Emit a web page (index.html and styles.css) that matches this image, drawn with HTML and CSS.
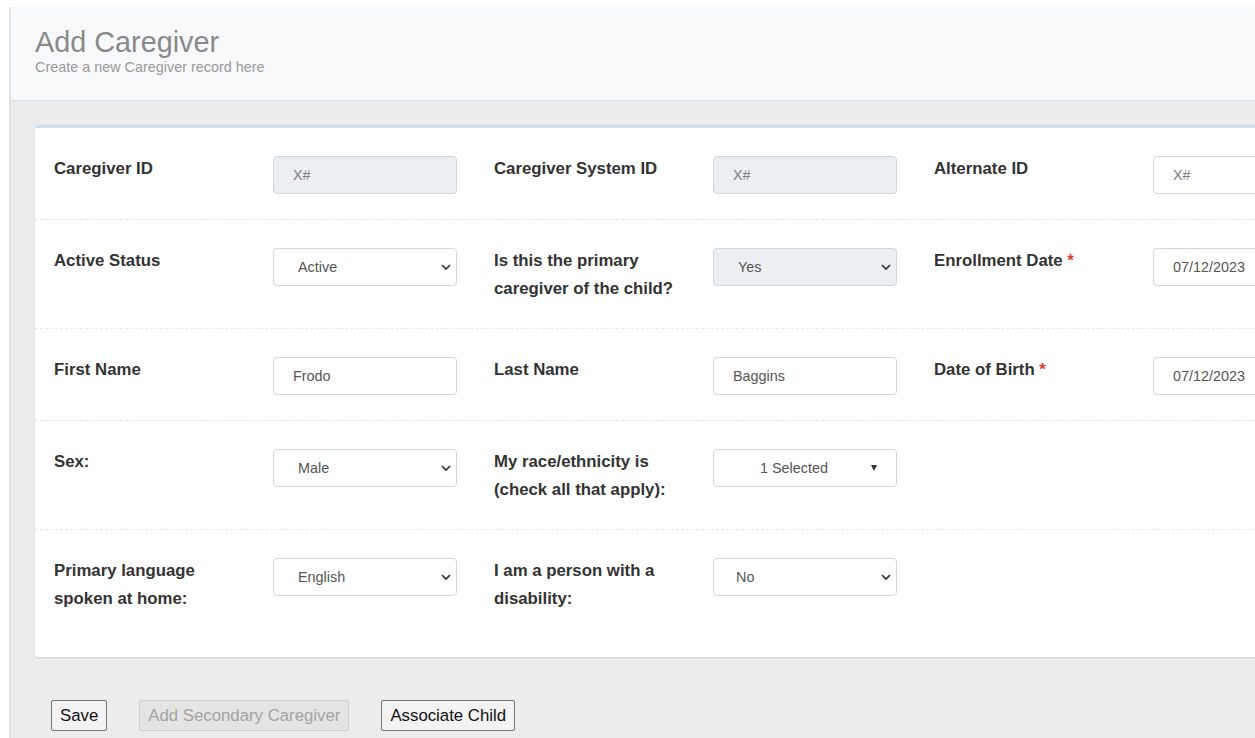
FILE: index.html
```html
<!DOCTYPE html>
<html lang="en">
<head>
<meta charset="utf-8">
<title>Add Caregiver</title>
<link rel="stylesheet" href="styles.css">
</head>
<body>
<div class="topbar"></div>
<main class="page">
  <header class="page-head">
    <h1 class="page-title">Add Caregiver</h1>
    <p class="page-sub">Create a new Caregiver record here</p>
  </header>

  <section class="content">
    <form class="card">
      <div class="form-row">
        <div class="field">
          <label class="field-label">Caregiver ID</label>
          <input class="control" type="text" value="X#" disabled>
        </div>
        <div class="field">
          <label class="field-label">Caregiver System ID</label>
          <input class="control" type="text" value="X#" disabled>
        </div>
        <div class="field">
          <label class="field-label">Alternate ID</label>
          <input class="control placeholder" type="text" placeholder="X#">
        </div>
      </div>

      <div class="form-row">
        <div class="field">
          <label class="field-label">Active Status</label>
          <div class="select-wrap">
            <select class="control select"><option>Active</option><option>Inactive</option></select>
            <svg class="chev" width="12" height="8" viewBox="0 0 12 8"><polyline points="2,2 6,6 10,2" fill="none" stroke="#333" stroke-width="1.7"/></svg>
          </div>
        </div>
        <div class="field">
          <label class="field-label">Is this the primary caregiver of the child?</label>
          <div class="select-wrap">
            <select class="control select locked" aria-disabled="true"><option>Yes</option><option>No</option></select>
            <svg class="chev" width="12" height="8" viewBox="0 0 12 8"><polyline points="2,2 6,6 10,2" fill="none" stroke="#333" stroke-width="1.7"/></svg>
          </div>
        </div>
        <div class="field">
          <label class="field-label">Enrollment Date <span class="req">*</span></label>
          <input class="control" type="text" value="07/12/2023">
        </div>
      </div>

      <div class="form-row">
        <div class="field">
          <label class="field-label">First Name</label>
          <input class="control" type="text" value="Frodo">
        </div>
        <div class="field">
          <label class="field-label">Last Name</label>
          <input class="control" type="text" value="Baggins">
        </div>
        <div class="field">
          <label class="field-label">Date of Birth <span class="req">*</span></label>
          <input class="control" type="text" value="07/12/2023">
        </div>
      </div>

      <div class="form-row">
        <div class="field">
          <label class="field-label">Sex:</label>
          <div class="select-wrap">
            <select class="control select"><option>Male</option><option>Female</option></select>
            <svg class="chev" width="12" height="8" viewBox="0 0 12 8"><polyline points="2,2 6,6 10,2" fill="none" stroke="#333" stroke-width="1.7"/></svg>
          </div>
        </div>
        <div class="field">
          <label class="field-label">My race/ethnicity is (check all that apply):</label>
          <button type="button" class="control multi">
            <span class="multi-text">1 Selected</span>
            <span class="caret"></span>
          </button>
        </div>
      </div>

      <div class="form-row last">
        <div class="field">
          <label class="field-label">Primary language spoken at home:</label>
          <div class="select-wrap">
            <select class="control select"><option>English</option><option>Spanish</option></select>
            <svg class="chev" width="12" height="8" viewBox="0 0 12 8"><polyline points="2,2 6,6 10,2" fill="none" stroke="#333" stroke-width="1.7"/></svg>
          </div>
        </div>
        <div class="field">
          <label class="field-label">I am a person with a disability:</label>
          <div class="select-wrap">
            <select class="control select slim"><option>No</option><option>Yes</option></select>
            <svg class="chev" width="12" height="8" viewBox="0 0 12 8"><polyline points="2,2 6,6 10,2" fill="none" stroke="#333" stroke-width="1.7"/></svg>
          </div>
        </div>
      </div>
    </form>

    <div class="actions">
      <button type="button" class="btn">Save</button>
      <button type="button" class="btn" disabled>Add Secondary Caregiver</button>
      <button type="button" class="btn">Associate Child</button>
    </div>
  </section>
</main>
</body>
</html>
```

FILE: styles.css
```css
html, body {
  margin: 0;
  padding: 0;
  height: 100%;
}

body {
  background: #ffffff;
  overflow: hidden;
  font-family: "Liberation Sans", Arial, sans-serif;
  color: #333333;
}

.topbar {
  height: 7px;
  background: #ffffff;
}

.page {
  margin-left: 9px;
  border-left: 2px solid #e2e5e8;
  background: #ececec;
  height: calc(100% - 7px);
}

.page-head {
  background: #f8f9fb;
  border-bottom: 1px solid #d5dee6;
  padding: 20px 24px 24px 24px;
}

.page-title {
  margin: 0;
  font-size: 28.8px;
  line-height: 31.7px;
  font-weight: normal;
  color: #898989;
}

.page-sub {
  margin: 0;
  font-size: 14.4px;
  line-height: 17.3px;
  color: #9a9a9a;
}

.content {
  padding: 24px 0 0 24px;
}

.card {
  width: 1360px;
  background: #ffffff;
  border-top: 3px solid #d4dde6;
  border-radius: 4px;
  box-shadow: 0 1px 2px rgba(0, 0, 0, 0.12);
  padding-bottom: 19px;
}

.form-row {
  display: flex;
  padding: 28px 0 25px 19px;
  border-bottom: 1px dashed #e7e7e7;
}

.form-row.last {
  border-bottom: none;
}

.field {
  display: flex;
  width: 440px;
  flex: none;
}

.field-label {
  width: 190px;
  margin-right: 29px;
  margin-top: -1px;
  font-size: 16.8px;
  line-height: 28px;
  font-weight: bold;
  color: #333333;
  flex: none;
}

.req {
  color: #e53935;
}

.control {
  box-sizing: border-box;
  width: 184px;
  height: 38px;
  border: 1px solid #d2d7dc;
  border-radius: 4px;
  background: #ffffff;
  padding: 0 10px 0 19px;
  font-family: "Liberation Sans", Arial, sans-serif;
  font-size: 14.4px;
  color: #555555;
  flex: none;
}

.control:disabled {
  background: #eceff1;
  color: #7d7d7d;
}

.control.locked {
  background: #eceff1;
  color: #555555;
  pointer-events: none;
}

.control.placeholder::placeholder {
  color: #7d7d7d;
  opacity: 1;
}

.select-wrap {
  position: relative;
  width: 184px;
  height: 38px;
  flex: none;
}

.select {
  appearance: none;
  -webkit-appearance: none;
  padding-left: 24px;
}

.select.slim {
  padding-left: 22px;
}

.chev {
  position: absolute;
  right: 5px;
  top: 15px;
  pointer-events: none;
}

.multi {
  display: flex;
  align-items: center;
  padding: 0 19px 0 46px;
  text-align: left;
}

.multi-text {
  flex: 1;
}

.caret {
  width: 0;
  height: 0;
  border-left: 3.5px solid transparent;
  border-right: 3.5px solid transparent;
  border-top: 6px solid #333333;
}

.actions {
  display: flex;
  gap: 32px;
  margin-top: 43px;
  padding-left: 16px;
}

.btn {
  height: 31px;
  padding: 0 8px;
  border: 1px solid #767676;
  border-radius: 2px;
  background: #f3f3f3;
  font-family: "Liberation Sans", Arial, sans-serif;
  font-size: 16.8px;
  color: #111111;
}

.btn:disabled {
  background: #e4e4e4;
  border-color: #cfcfcf;
  color: #a3a3a3;
}
```
